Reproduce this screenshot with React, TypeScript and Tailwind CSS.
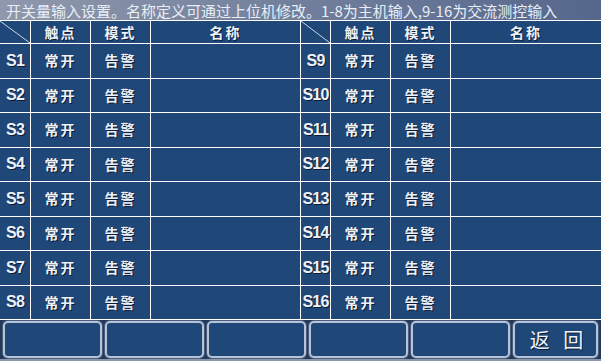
const ROWS = [1, 2, 3, 4, 5, 6, 7, 8];

const cell =
  "flex items-center justify-center bg-[#1f4778] text-[#eef2f8] font-bold [text-shadow:1px_1px_0_#0b1c36]";

function CornerCell() {
  return (
    <div className="relative bg-[#1f4778]">
      <svg className="absolute inset-0 h-full w-full" preserveAspectRatio="none" viewBox="0 0 30 22">
        <line x1="0" y1="0" x2="30" y2="22" stroke="#c9d6e8" strokeWidth="1" vectorEffect="non-scaling-stroke" />
      </svg>
    </div>
  );
}

function HeadCells() {
  return (
    <>
      <CornerCell />
      <div className={`${cell} text-[14px] tracking-[2px]`}>触点</div>
      <div className={`${cell} text-[14px] tracking-[2px]`}>模式</div>
      <div className={`${cell} text-[14px] tracking-[2px]`}>名称</div>
    </>
  );
}

function RowCells({ n }: { n: number }) {
  return (
    <>
      <div className={`${cell} font-['Liberation_Sans',Arial,sans-serif] text-[16px] tracking-[-0.8px]`}>S{n}</div>
      <div className={`${cell} text-[14px] tracking-[2px]`}>常开</div>
      <div className={`${cell} text-[14px] tracking-[2px]`}>告警</div>
      <div className={cell}></div>
    </>
  );
}

function RowCellsPair({ n }: { n: number }) {
  return (
    <>
      <RowCells n={n} />
      <RowCells n={n + 8} />
    </>
  );
}

export default function App() {
  return (
    <div className="flex h-[361px] w-[601px] flex-col overflow-hidden bg-[#1f4778] font-['Noto_Sans_CJK_SC',sans-serif]">
      <div className="flex h-[20px] shrink-0 items-center bg-linear-to-r from-[#8f98ac] to-[#55678c] pl-[6px] text-[15px] leading-none text-[#e9eef6] whitespace-nowrap">
        开关量输入设置。名称定义可通过上位机修改。1-8为主机输入,9-16为交流测控输入
      </div>
      <div className="grid h-[300px] shrink-0 grid-cols-[30px_59px_59px_149px_29px_59px_59px_150px] grid-rows-[22px_repeat(8,1fr)] gap-px border-y border-white bg-white">
        <HeadCells />
        <HeadCells />
        {ROWS.map((n) => (
          <RowCellsPair key={n} n={n} />
        ))}
      </div>
      <div className="flex h-[41px] shrink-0 gap-[3px] border-b-2 border-[#8b97ab] bg-[#24385a] px-[3px] pt-[1px] pb-[1px]">
        {[0, 1, 2, 3, 4].map((i) => (
          <div
            key={i}
            className="w-[99px] rounded-[5px] border-2 border-[#b6c4d8] bg-[#1f4778] ring-1 ring-[#4b5e80]"
          />
        ))}
        <button className="flex flex-1 items-center justify-center whitespace-nowrap rounded-[5px] border-2 border-[#b6c4d8] bg-[#1f4778] pl-[2px] text-[20px] leading-none text-[#eef2f8] ring-1 ring-[#4b5e80] [text-shadow:1px_1px_0_#0b1c36]">
          返&nbsp;&nbsp;&nbsp;回
        </button>
      </div>
    </div>
  );
}
